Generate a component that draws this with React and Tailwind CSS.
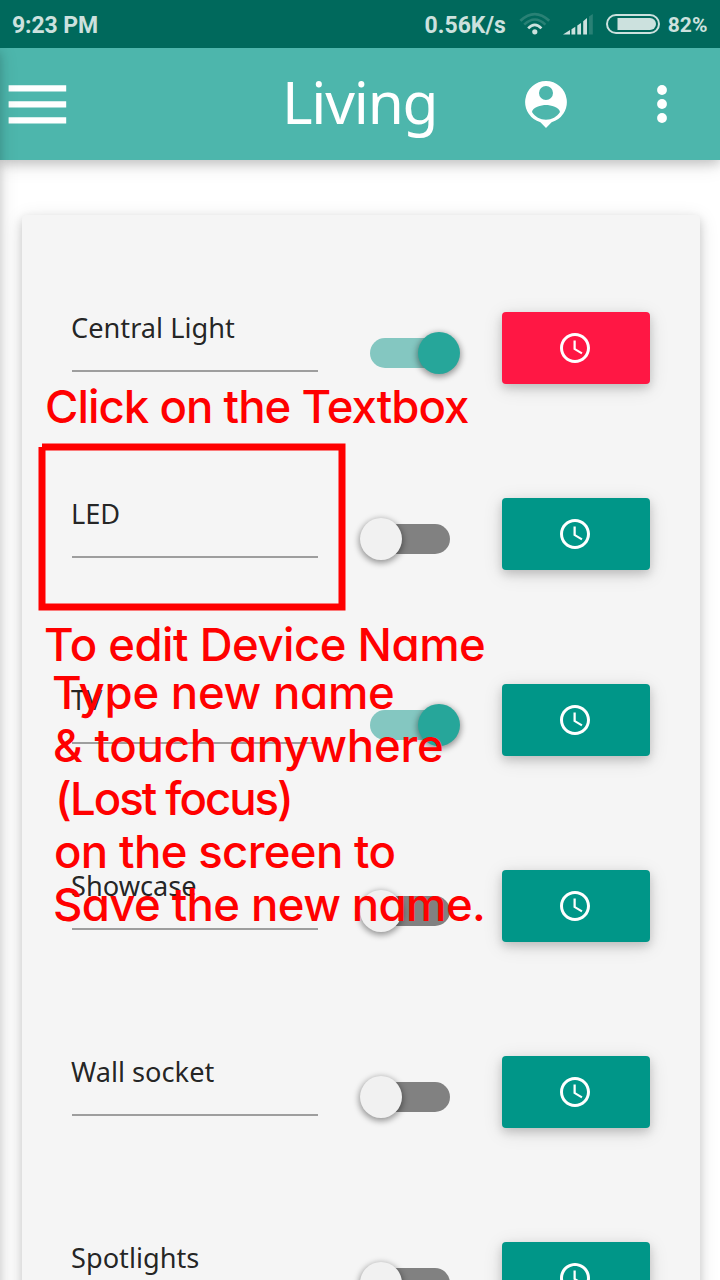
const devices = [
  { name: "Central Light", on: true, alert: true },
  { name: "LED", on: false },
  { name: "TV", on: true },
  { name: "Showcase", on: false },
  { name: "Wall socket", on: false },
  { name: "Spotlights", on: false },
];

function StatusBar() {
  return (
    <div className="relative z-20 flex h-12 items-center bg-[#00695c] pl-3 pr-[12.6px] font-['Roboto',sans-serif] text-[23px] leading-[48px] font-bold text-[#cce1de]">
      <span className="mt-[3px] tracking-[-0.1px]">9:23 PM</span>
      <span className="mt-[3px] ml-auto">0.56K/s</span>
      <svg className="ml-[13px] h-8 w-8" viewBox="0 0 32 32" fill="none" stroke="#cce1de">
        <circle cx="15.8" cy="23.8" r="2.6" fill="#cce1de" stroke="none" />
        <path d="M9.2 20.4Q15.8 13.4 22.4 20.4" strokeWidth="2.7" />
        <path d="M5.2 16.6Q15.8 6.4 26.4 16.6" strokeWidth="2.6" opacity="0.2" />
        <path d="M1.4 12.8Q15.8 -0.6 30.2 12.8" strokeWidth="2.8" opacity="0.2" />
      </svg>
      <svg className="ml-[12px] h-8 w-[31px]" viewBox="0 0 31 32" fill="#cce1de">
        <path d="M0 26.5 7 22V26.5z" />
        <path d="M8.5 21.2 12.3 18.8V26.5H8.5z" />
        <path d="M14.3 17.6 18 15V26.5h-3.7z" />
        <path d="M20.2 13.2 24 10V26.5h-3.8z" />
        <path d="M26 8.6 29.8 6V26.5H26z" opacity="0.2" />
      </svg>
      <svg className="ml-[12.4px] h-8 w-[54px]" viewBox="0 0 54 32" fill="none">
        <rect x="1" y="7" width="52" height="18" rx="9" stroke="#cce1de" strokeWidth="2" />
        <path d="M11.5 10H44a6 6 0 0 1 0 12H11.5z" fill="#cce1de" />
      </svg>
      <span className="mt-[2px] ml-[7.6px] text-[21px]">82%</span>
    </div>
  );
}

function NavBar() {
  return (
    <header className="relative z-10 flex h-28 items-center bg-[#4db6ac] text-white shadow-[0_4px_10px_0_rgba(0,0,0,0.16),0_4px_20px_0_rgba(0,0,0,0.12)]">
      <svg className="-ml-[0.9px] h-[76.8px] w-[76.8px]" viewBox="0 0 24 24" fill="currentColor">
        <path d="M3 18h18v-2H3v2zm0-5h18v-2H3v2zm0-7v2h18V6H3z" />
      </svg>
      <h1 className="mb-[5px] ml-[206px] w-[159.1px] whitespace-nowrap font-['Noto_Sans',sans-serif] text-[58.5px] leading-[107px] tracking-[-1.2px]">Living</h1>
      <svg className="ml-[84px] h-[47px] w-[42px]" viewBox="0 0 42 47" fill="currentColor">
        <path
          fillRule="evenodd"
          d="M21 0a21 21 0 0 0-5.6 41.2L21 47l5.6-5.8A21 21 0 0 0 21 0zM21 5a7 7 0 1 1 0 14 7 7 0 0 1 0-14zM7 31C7.2 26.4 16.4 24 21 24S34.8 26.4 35 31C32 35.9 26.8 38.7 21 38.7S10 35.9 7 31z"
        />
      </svg>
      <svg className="ml-[67px] h-14 w-14" viewBox="0 0 24 24" fill="currentColor">
        <circle cx="12" cy="6" r="2.1" />
        <circle cx="12" cy="12" r="2.1" />
        <circle cx="12" cy="18" r="2.1" />
      </svg>
    </header>
  );
}

function Switch({ on }) {
  return (
    <div className={`ml-[52px] mt-[26px] flex h-[30px] w-20 items-center rounded-[15px] ${on ? "bg-[#84c7c1]" : "bg-[#818181]"}`}>
      <div
        className={`h-[42px] w-[42px] shrink-0 rounded-[21px] shadow-[0_2px_6px_1px_rgba(0,0,0,0.4)] ${on ? "ml-12 bg-[#26a69a]" : "-ml-[10px] bg-[#f1f1f1]"}`}
      />
    </div>
  );
}

function DeviceRow({ device }) {
  return (
    <div className="flex h-[186px] items-start">
      <div className="h-[60px] w-[246px] border-b-2 border-[#9e9e9e] font-['Noto_Sans',sans-serif] text-[27.2px] leading-[32px] whitespace-nowrap text-black/87">
        <span className="-ml-px">{device.name}</span>
      </div>
      <Switch on={device.on} />
      <button
        className={`ml-[52px] flex h-[72px] w-[148px] items-center justify-center rounded-[4px] pr-[2px] shadow-[0_4px_10px_0_rgba(0,0,0,0.16),0_4px_20px_0_rgba(0,0,0,0.12)] ${device.alert ? "bg-[#ff1744]" : "bg-[#009688]"}`}
      >
        <svg className="h-9 w-9" viewBox="0 0 24 24" fill="white">
          <path d="M11.99 2C6.47 2 2 6.48 2 12s4.47 10 9.99 10C17.52 22 22 17.52 22 12S17.52 2 11.99 2zM12 20c-4.42 0-8-3.58-8-8s3.58-8 8-8 8 3.58 8 8-3.58 8-8 8zm.5-13H11v6l5.25 3.15.75-1.23-4.5-2.67z" />
        </svg>
      </button>
    </div>
  );
}

function Annotations() {
  return (
    <div className="absolute inset-0 z-30 font-['Inter',sans-serif] text-[45.5px] leading-[53px] font-medium whitespace-nowrap text-[#ff0000] [font-feature-settings:'cv11']">
      <svg className="absolute top-[440px] left-[36px] h-[174px] w-[314px]" viewBox="36 440 314 174" fill="none">
        <path d="M42 447H342V607H42V447" stroke="#ff0000" strokeWidth="7" />
      </svg>
      <p className="absolute top-[380px] left-[45px] tracking-[-0.95px]">Click on the Textbox</p>
      <p className="absolute top-[618px] left-[44px] tracking-[-0.5px]">To edit Device Name</p>
      <div className="absolute top-[666px] left-[52px]">
        <p className="tracking-[-0.25px]">Type new name</p>
        <p className="pl-px tracking-[-0.2px]">&amp; touch anywhere</p>
        <p className="pl-[3px] tracking-[-2px]">(Lost focus)</p>
        <p className="pl-[2px] tracking-[-0.65px]">on the screen to</p>
        <p className="pl-px tracking-[-0.6px]">Save the new name.</p>
      </div>
    </div>
  );
}

export default function App() {
  return (
    <div className="relative h-[1280px] w-[720px] overflow-hidden bg-white">
      <StatusBar />
      <NavBar />
      <div className="absolute top-12 -left-5 z-[15] h-[1300px] w-5 shadow-[0_4px_10px_0_rgba(0,0,0,0.16),0_4px_20px_0_rgba(0,0,0,0.12)]" />
      <main className="mx-[22px] mr-5 mt-[55px] h-[1200px] rounded-[4px] bg-[#f5f5f5] pt-[97px] pl-[50px] shadow-[0_4px_10px_0_rgba(0,0,0,0.16),0_4px_20px_0_rgba(0,0,0,0.12)]">
        {devices.map((device) => (
          <DeviceRow key={device.name} device={device} />
        ))}
      </main>
      <Annotations />
    </div>
  );
}
